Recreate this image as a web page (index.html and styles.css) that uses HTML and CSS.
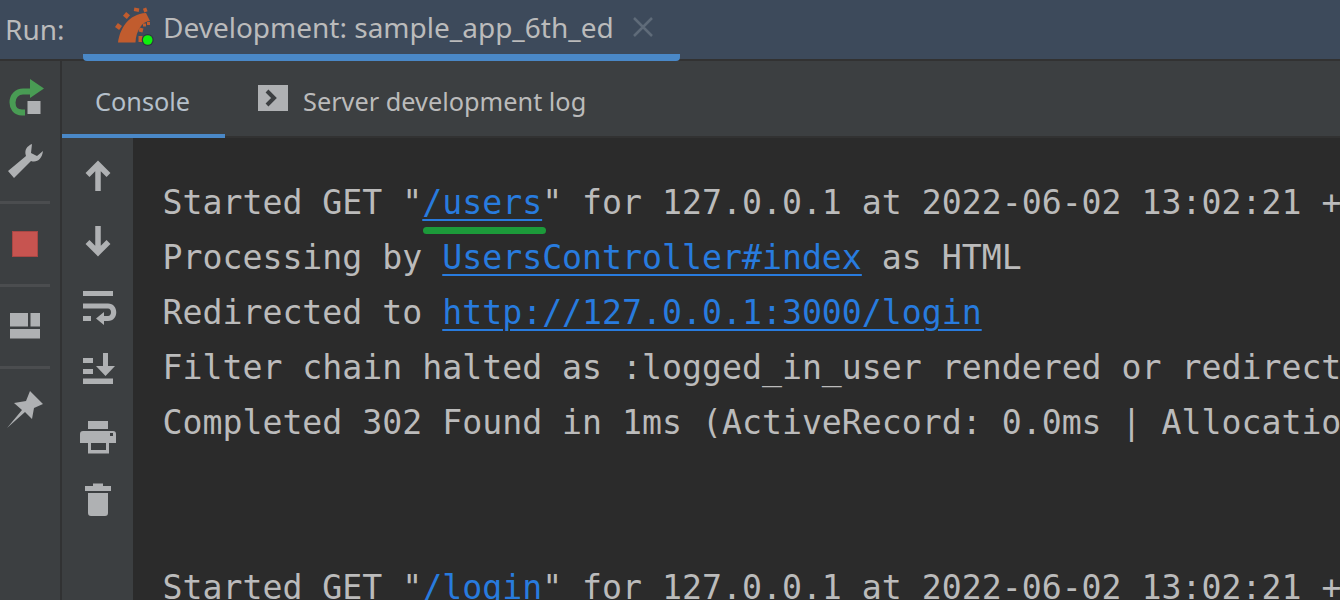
FILE: index.html
```html
<!DOCTYPE html>
<html lang="en">
<head>
<meta charset="utf-8">
<title>Run: Development</title>
<link rel="stylesheet" href="styles.css">
</head>
<body>
<header class="topbar">
  <span class="run-label">Run:</span>
  <div class="run-tab">
    <svg class="rails" viewBox="112 8 42 42" aria-hidden="true">
      <path class="rust" d="M118 43.500C120 30 128 15 146 14L150 22C142 22 136 32 135.500 43.500Z"/>
      <g class="rust">
        <rect x="116" y="25" width="5" height="5" transform="rotate(35 118.500 27.500)"/>
        <rect x="124" y="14" width="5" height="5" transform="rotate(40 126.500 16.500)"/>
        <rect x="134" y="9" width="5" height="3.500" transform="rotate(10 136.500 11)"/>
        <rect x="143.500" y="9" width="3.500" height="4" transform="rotate(-20 145 11)"/>
        <rect x="138.500" y="37" width="4" height="6"/>
        <rect x="139" y="29" width="4" height="4" transform="rotate(15 141 31)"/>
        <rect x="143" y="24.500" width="3" height="3"/>
        <rect x="147" y="23" width="3" height="3"/>
      </g>
      <circle cx="147.700" cy="41" r="6" class="dot-ring"/>
      <circle cx="147.700" cy="41" r="4.800" class="dot"/>
    </svg>
    <span class="run-title">Development: sample_app_6th_ed</span>
    <svg class="close" viewBox="0 0 20 20" aria-hidden="true"><path d="M1 1L19 19M19 1L1 19"/></svg>
  </div>
</header>
<div class="body">
  <aside class="rail">
    <svg class="rail-icon" viewBox="0 72 50 50" aria-hidden="true">
      <path class="green-stroke" d="M25 112.500H22C15 112.500 12.500 107 12.500 102.500C12.500 96 17 91.500 23 91.500H33"/>
      <path class="green" d="M30 79L44 88.500L30 98Z"/>
      <rect class="icon" x="27.500" y="101" width="13" height="13"/>
    </svg>
    <svg class="rail-icon" viewBox="0 136 50 50" aria-hidden="true">
      <path class="icon" d="M32 144C27 146 24 150 26 156L8 171L14 178L31 161C37 163 42 159 43 151L37 156L31 153Z"/>
    </svg>
    <div class="rail-sep"></div>
    <svg class="rail-icon" viewBox="0 219 50 50" aria-hidden="true">
      <rect class="stop" x="12.500" y="231.500" width="25" height="25"/>
    </svg>
    <div class="rail-sep"></div>
    <svg class="rail-icon rail-icon-short" viewBox="0 302 50 49" aria-hidden="true">
      <path class="icon" d="M10 313H28V326.500H10ZM30.500 313H40V326.500H30.500ZM10 329H40V338.500H10Z"/>
    </svg>
    <div class="rail-sep"></div>
    <svg class="rail-icon" viewBox="0 384 50 50" aria-hidden="true">
      <path class="icon" d="M30 391L43 404L34 408L32 419L25 412L7 428L22 410L14 403L26 401Z"/>
    </svg>
  </aside>
  <main class="main">
    <nav class="tabs">
      <div class="tab tab-active">Console</div>
      <div class="tab tab-log">
        <svg class="tab-icon" viewBox="0 0 30 26" aria-hidden="true">
          <rect class="icon" width="30" height="26"/>
          <path class="chev" d="M9 6L16 13L9 20"/>
        </svg>
        <span>Server development log</span>
      </div>
    </nav>
    <div class="content">
      <div class="gutter">
        <svg class="tool" viewBox="78 156 40 40" aria-hidden="true"><path class="icon-stroke" d="M98 191V164M87.500 175L98 164.500L108.500 175"/></svg>
        <svg class="tool" viewBox="78 221 40 40" aria-hidden="true"><path class="icon-stroke" d="M98 226V253M87.500 242L98 252.500L108.500 242"/></svg>
        <svg class="tool" viewBox="78 286 40 40" aria-hidden="true">
          <path class="icon" d="M83 291H113V296H83ZM83 316H91V321H83ZM96 318.500L104 312V316H108C112 316 112 308.500 108 308.500H83V303.500H108C119 303.500 119 321 108 321H104V325Z"/>
        </svg>
        <svg class="tool" viewBox="78 351 40 40" aria-hidden="true">
          <path class="icon" d="M103 353H108V366H115L105.500 376L96 366H103ZM83 358H93V363H83ZM83 369H93V374H83ZM83 378.500H113V384H83Z"/>
        </svg>
        <svg class="tool" viewBox="78 416 40 40" aria-hidden="true">
          <path class="icon" d="M88 421H108V429H88ZM83 431H113C115 431 116 432 116 434V443H109V453.500H88V443H80V434C80 432 81 431 83 431ZM91 443V450H106V443Z"/>
          <rect class="hole" x="110" y="433" width="3" height="3"/>
        </svg>
        <svg class="tool" viewBox="78 481 40 40" aria-hidden="true">
          <path class="icon" d="M93 483.500H103V486H111V491H85V486H93ZM88 493H108V513C108 515 107 516 105 516H91C89 516 88 515 88 513Z"/>
        </svg>
      </div>
      <div class="console">
        <div class="line">Started GET "<span class="link-wrap"><a class="link">/users</a><span class="squiggle"></span></span>" for 127.0.0.1 at 2022-06-02 13:02:21 +0000</div>
        <div class="line">Processing by <a class="link">UsersController#index</a> as HTML</div>
        <div class="line">Redirected to <a class="link">http://127.0.0.1:3000/login</a></div>
        <div class="line">Filter chain halted as :logged_in_user rendered or redirected</div>
        <div class="line">Completed 302 Found in 1ms (ActiveRecord: 0.0ms | Allocations: 0)</div>
        <div class="line">&nbsp;</div>
        <div class="line">&nbsp;</div>
        <div class="line">Started GET "<a class="link">/login</a>" for 127.0.0.1 at 2022-06-02 13:02:21 +0000</div>
      </div>
    </div>
  </main>
</div>
</body>
</html>
```
FILE: styles.css
```css
* { box-sizing: border-box; }
html, body { margin: 0; height: 600px; overflow: hidden; }
body {
  background: #2b2b2b;
  font-family: "Noto Sans", "Open Sans", sans-serif;
  color: #bbbbbb;
  display: flex;
  flex-direction: column;
}
.topbar {
  flex: none;
  height: 61px;
  background: #3d4a5b;
  border-bottom: 2px solid #323232;
  display: flex;
  align-items: flex-start;
  font-size: 28px;
  line-height: 59px;
}
.run-label { width: 83px; padding-left: 5px; flex: none; }
.run-tab {
  width: 597px;
  height: 61px;
  border-bottom: 7px solid #4a88c7;
  border-radius: 0 0 4px 4px;
  display: flex;
  align-items: center;
  position: relative;
}
.rails { width: 42px; height: 42px; margin-left: 29px; flex: none; position: relative; top: 1px; }
.rust { fill: #c15c2e; }
.dot-ring { fill: #2f3540; }
.dot { fill: #0ef00e; }
.run-title { margin-left: 9px; white-space: nowrap; width: 451px; }
.close { width: 20px; height: 20px; margin-left: 19px; flex: none; fill: none; stroke: #5f6b79; stroke-width: 2.500; }

.body { flex: 1; display: flex; min-height: 0; }
.rail {
  flex: none;
  width: 62px;
  background: #3c3f41;
  border-right: 2px solid #313233;
  display: flex;
  flex-direction: column;
  gap: 14px;
  padding-top: 11px;
}
.rail-icon { width: 50px; height: 50px; flex: none; }
.rail-icon-short { height: 49px; }
.rail-sep { width: 50px; height: 3px; margin: 1px 0; background: #4b4d4f; flex: none; }

.icon { fill: #afb1b3; }
.green { fill: #499c54; }
.green-stroke { fill: none; stroke: #499c54; stroke-width: 6; }
.stop { fill: #c75450; stroke: #a84744; stroke-width: 1; }
.hole { fill: #3c3f41; }
.icon-stroke { fill: none; stroke: #afb1b3; stroke-width: 5.500; }

.main { flex: 1; min-width: 0; display: flex; flex-direction: column; }
.tabs {
  flex: none;
  height: 77px;
  background: #3c3f41;
  border-bottom: 2px solid #323232;
  display: flex;
  font-size: 25.300px;
}
.tab { height: 77px; display: flex; align-items: center; padding-top: 7px; }
.tab-active { width: 163px; padding-left: 33px; border-bottom: 4px solid #4a88c7; color: #b5c0cb; }
.tab-log { padding-left: 33px; gap: 15px; padding-top: 3px; }
.tab-icon { width: 30px; height: 26px; flex: none; margin-bottom: 7px; }
.chev { fill: none; stroke: #3c3f41; stroke-width: 4; }

.content { flex: 1; display: flex; min-height: 0; }
.gutter {
  flex: none;
  width: 71px;
  background: #3c3f41;
  padding: 18px 0 0 16px;
  display: flex;
  flex-direction: column;
  gap: 25px;
}
.tool { width: 40px; height: 40px; flex: none; }
.console {
  flex: 1;
  min-width: 0;
  background: #2b2b2b;
  padding: 37px 0 0 29.500px;
  font-family: "DejaVu Sans Mono", "Liberation Mono", monospace;
  font-size: 33.200px;
  line-height: 55px;
  overflow: hidden;
}
.line { white-space: pre; }
.link {
  color: #287bde;
  text-decoration: underline;
  text-decoration-thickness: 2px;
  text-underline-offset: 5px;
}
.link-wrap { position: relative; display: inline-block; }
.squiggle {
  position: absolute;
  left: 1px;
  top: 52px;
  width: 123px;
  height: 7px;
  border-radius: 4px;
  background: #1c9a3a;
}
```
